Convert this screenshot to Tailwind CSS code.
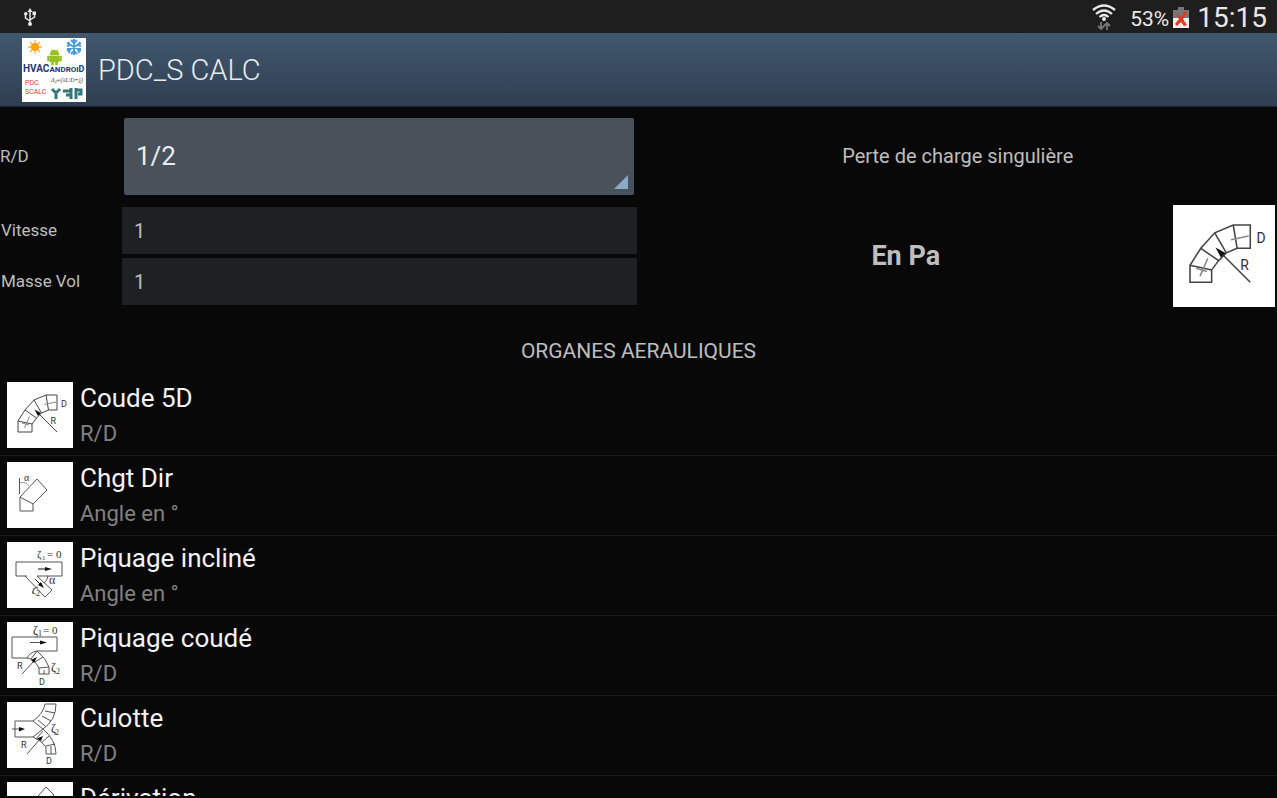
<!DOCTYPE html>
<html lang="fr">
<head>
  <meta charset="UTF-8" />
  <meta name="viewport" content="width=device-width, initial-scale=1" />
  <title>PDC_S CALC</title>
  <script src="https://cdn.jsdelivr.net/npm/@tailwindcss/browser@4"></script>
</head>
<body class="h-screen flex flex-col overflow-hidden bg-[#080808] text-[#bebebe] font-[Roboto,sans-serif]">

  <!-- Dessins des organes -->
  <svg class="hidden">
    <symbol id="coude" viewBox="0 0 66 66">
      <g fill="none" stroke="#444" stroke-width="1">
        <path d="M39 13H50V28H41.5L34.5 31L29.5 36L25 42V50H11V39L18 28L27 18Z" />
        <path d="M39 13L41.5 28M27 18L34.5 31M18 28L29.5 36M11 39L25 42" />
        <path d="M50 50L30 30" />
        <path d="M37.5 22.5L49 20M22.500 34.5L17.500 46M15 41L22 43" stroke="#888" />
      </g>
      <path d="M27.500 27.500L34 31L31 34Z" fill="#111" />
      <text x="54" y="24.500" font-size="9" fill="#333">D</text>
      <text x="43.500" y="42" font-size="9" fill="#333">R</text>
    </symbol>
    <symbol id="chgt" viewBox="0 0 66 66">
      <g fill="none" stroke="#555" stroke-width="1">
        <path d="M13 35L30 17L40 28L26 42L26 49H13Z" />
        <path d="M13 35L26 42M12.500 16V32" />
        <path d="M13 21Q19 19 22 24" stroke="#999" />
      </g>
      <text x="17" y="19" font-size="10" font-family="Liberation Serif, serif" fill="#333">α</text>
    </symbol>
    <symbol id="incline" viewBox="0 0 66 66">
      <g fill="none" stroke="#555" stroke-width="1">
        <path d="M20 34H9V20H55V34H30L45 48L38 55L18 34" />
        <path d="M31 27H40M28 37L33 42" stroke="#111" />
        <path d="M41 34Q40 39 37 41" />
        <path d="M31 45Q25 46 26 52" />
      </g>
      <path d="M38 25L45 27L38 29ZM31 43L37 46L34 40Z" fill="#111" />
      <g fill="#333" font-family="Liberation Serif, serif">
        <text x="30" y="16" font-size="11">ζ</text>
        <text x="35" y="18" font-size="7">1</text>
        <text x="40" y="16" font-size="11">= 0</text>
        <text x="42" y="42" font-size="12">α</text>
        <text x="25" y="52" font-size="9">ζ</text>
        <text x="29" y="54" font-size="8">2</text>
      </g>
    </symbol>
    <symbol id="piquage" viewBox="0 0 66 66">
      <g fill="none" stroke="#555" stroke-width="1">
        <path d="M20 36H5V15H50V29H30Q23 30 20 36L24 37Q30 41 32 46V52H42V45Q39 36 30 29" />
        <path d="M24 37L30 29M28 40L36 35M32 46L42 45M37 48V52" />
        <path d="M15 52L28 38M23 20.500H34" />
      </g>
      <path d="M33 18.500L40 20.500L33 22.500ZM30 35L24 38L27 41Z" fill="#111" />
      <g fill="#333" font-family="Liberation Serif, serif">
        <text x="26" y="12" font-size="12">ζ</text>
        <text x="31" y="14" font-size="8">1</text>
        <text x="36" y="12" font-size="11">= 0</text>
        <text x="44" y="49" font-size="12">ζ</text>
        <text x="49" y="52" font-size="8">2</text>
      </g>
      <text x="10" y="47" font-size="9" fill="#333">R</text>
      <text x="32" y="63" font-size="9" fill="#333">D</text>
    </symbol>
    <symbol id="culotte" viewBox="0 0 66 66">
      <g fill="none" stroke="#555" stroke-width="1">
        <path d="M26 35H8V19H26Q36 12 38 2H49Q49 18 36 27Q49 38 49 52H39V45Q34 38 26 35" />
        <path d="M38 9L48 11M35 14L44 19M31 18L38 24M26 19L36 27L26 35M29 37L36 29M34 41L42 34M39 44L48 42M44 44V52" />
        <path d="M5 27H14M20 52L34 36" />
      </g>
      <path d="M12 25L18 27L12 29.500ZM36 34L30 36.500L34 39Z" fill="#111" />
      <g fill="#333" font-family="Liberation Serif, serif">
        <text x="44" y="30" font-size="12">ζ</text>
        <text x="48" y="33" font-size="8">2</text>
      </g>
      <text x="14" y="46" font-size="9" fill="#333">R</text>
      <text x="39" y="62" font-size="9" fill="#333">D</text>
    </symbol>
    <symbol id="derivation" viewBox="0 0 66 66">
      <path d="M13 35L39 5L47 13L36 26L26 42V49H13Z" fill="none" stroke="#555" stroke-width="1" />
    </symbol>
  </svg>

  <!-- Barre d'état -->
  <div class="h-[33px] shrink-0 flex items-center justify-between bg-[#1e1e1e] pl-6 pr-2.5 text-[#e8e8e8]">
    <svg class="w-3 h-[18px]" viewBox="0 0 12 18" fill="none" stroke="#e8e8e8" stroke-width="1.500">
      <path d="M6 2V16M6 13L1.500 10V6M6 12L10.500 9V5" />
      <path d="M6 0L8.500 4H3.500Z" fill="#e8e8e8" stroke="none" />
      <circle cx="6" cy="16" r="2" fill="#e8e8e8" stroke="none" />
      <circle cx="1.800" cy="5.800" r="1.800" fill="#e8e8e8" stroke="none" />
      <path d="M8.500 3.500H12V7H8.500z" fill="#e8e8e8" stroke="none" />
    </svg>
    <div class="flex items-center">
      <svg class="w-6 h-[26px] mr-3.5" viewBox="0 0 24 26" fill="none">
        <path d="M1 6Q12 -3 23 6M4 10Q12 3 20 10M7.500 13Q12 9 16.500 13" stroke="#e8e8e8" stroke-width="2.300" />
        <circle cx="12" cy="15" r="2" fill="#e8e8e8" />
        <path d="M9 18V25M6 22L9 25L12 22M15 26V19M12 22L15 19L18 22" stroke="#777" stroke-width="1.800" />
      </svg>
      <span class="text-[21px] leading-8 pt-1 mr-1">53%</span>
      <svg class="w-4 h-[22px] mr-2" viewBox="0 0 16 22">
        <path d="M5 1H11V4H16V12H0V4H5Z" fill="#777" />
        <path d="M0 12H16V22H0Z" fill="#f0f0f0" />
        <path d="M3 7L8 11L12 5L14 7L10 13L14 19L11 20L8 16L4 20L2 18L6 13Z" fill="#e03a1c" />
      </svg>
      <span class="text-[28px] leading-8 pt-0.5">15:15</span>
    </div>
  </div>

  <!-- Barre de titre -->
  <header class="h-[74px] shrink-0 flex items-center gap-3 pl-[22px] bg-linear-to-b from-[#42586f] to-[#2f3f50] border-b border-[#1c2631]">
    <svg class="w-16 h-16 bg-white" viewBox="0 0 64 64">
      <path d="M13 2V16M6 9H20M8 4L18 14M18 4L8 14" stroke="#f9b233" stroke-width="1.300" />
      <circle cx="13" cy="9" r="4" fill="#fba31a" />
      <path d="M52 1V17M45 5L59 13M59 5L45 13M49 2L52 5L55 2M49 16L52 13L55 16M45 8L48 7L46 4M59 8L56 7L58 4M45 11L48 11L47 15M59 11L56 11L57 15" stroke="#4a9bdc" stroke-width="2" fill="none" />
      <path d="M28 17Q28 12 32.500 12Q37 12 37 17ZM28 18H37V24H35.500V27H33.500V24H31.500V27H29.500V24H28ZM25.500 18H27.500V23H25.500ZM37.500 18H39.500V23H37.500ZM29 11L31 14M36 11L34 14" fill="#97c024" stroke="#97c024" stroke-width="0.500" />
      <text x="1" y="34" font-size="10" font-weight="700" fill="#183a6e">HVAC<tspan font-size="8">ANDROI</tspan><tspan font-size="9">D</tspan></text>
      <text x="3" y="47" font-size="7" fill="#e53935">PDC</text>
      <text x="3" y="56" font-size="7" fill="#e53935">SCALC</text>
      <text x="29" y="44" font-size="6" font-style="italic" font-family="Liberation Serif, serif" fill="#333">Δₚ=(λL/D+ξ)</text>
      <path d="M30 51L34 55L38 51M34 54V61M41 53H49M44 57H49M49 50V61M54 50V61M54 52H59V56H56" stroke="#35767a" stroke-width="3" fill="none" />
    </svg>
    <h1 class="text-[29px] leading-9 font-light text-[#e8ecf0]">PDC_S CALC</h1>
  </header>

  <!-- Saisie et résultat -->
  <main class="shrink-0 grid grid-cols-2 text-[17px]">
    <form class="pt-[11px]">
      <div class="flex items-center mb-3">
        <label for="rd" class="w-[124px]">R/D</label>
        <div class="relative flex-1 mr-[5px]">
          <select id="rd" class="appearance-none block w-full h-[77px] rounded-xs bg-[#49515a] px-3 text-[26px] text-[#e8ecf0]">
            <option>1/2</option>
            <option>1</option>
            <option>2</option>
          </select>
          <svg class="absolute right-1.5 bottom-1.5 w-3.5 h-3.5 pointer-events-none" viewBox="0 0 14 14"><path d="M14 0V14H0Z" fill="#8ea9c6" /></svg>
        </div>
      </div>
      <div class="flex items-center mb-1">
        <label for="vitesse" class="w-[122px] pl-px">Vitesse</label>
        <input id="vitesse" type="text" value="1" class="flex-1 h-[47px] mr-0.5 px-3 bg-[#1e2123] text-xl" />
      </div>
      <div class="flex items-center">
        <label for="masse" class="w-[122px] pl-px">Masse Vol</label>
        <input id="masse" type="text" value="1" class="flex-1 h-[47px] mr-0.5 px-3 bg-[#1e2123] text-xl" />
      </div>
    </form>
    <section class="flex flex-col">
      <h2 class="h-[98px] flex items-center justify-center text-xl">Perte de charge singulière</h2>
      <div class="flex items-center pr-0.5">
        <p class="flex-1 text-center text-[27px] font-bold">En Pa</p>
        <svg class="w-[102px] h-[102px] bg-white"><use href="#coude" /></svg>
      </div>
    </section>
  </main>

  <!-- Liste des organes -->
  <h2 class="shrink-0 pt-[30px] pb-[11px] text-center text-[21px] leading-7">ORGANES AERAULIQUES</h2>
  <ul class="flex-1 min-h-0 overflow-hidden mb-0.5">
    <li class="h-20 flex items-start gap-[7px] pt-1.5 pl-[7px] border-b border-[#1b1b1b]">
      <svg class="w-[66px] h-[66px] bg-white"><use href="#coude" /></svg>
      <div class="-mt-0.5">
        <h3 class="text-[26px] leading-9 text-[#f3f3f3]">Coude 5D</h3>
        <p class="text-[22px] leading-9 text-[#808080]">R/D</p>
      </div>
    </li>
    <li class="h-20 flex items-start gap-[7px] pt-1.5 pl-[7px] border-b border-[#1b1b1b]">
      <svg class="w-[66px] h-[66px] bg-white"><use href="#chgt" /></svg>
      <div class="-mt-0.5">
        <h3 class="text-[26px] leading-9 text-[#f3f3f3]">Chgt Dir</h3>
        <p class="text-[22px] leading-9 text-[#808080]">Angle en °</p>
      </div>
    </li>
    <li class="h-20 flex items-start gap-[7px] pt-1.5 pl-[7px] border-b border-[#1b1b1b]">
      <svg class="w-[66px] h-[66px] bg-white"><use href="#incline" /></svg>
      <div class="-mt-0.5">
        <h3 class="text-[26px] leading-9 text-[#f3f3f3]">Piquage incliné</h3>
        <p class="text-[22px] leading-9 text-[#808080]">Angle en °</p>
      </div>
    </li>
    <li class="h-20 flex items-start gap-[7px] pt-1.5 pl-[7px] border-b border-[#1b1b1b]">
      <svg class="w-[66px] h-[66px] bg-white"><use href="#piquage" /></svg>
      <div class="-mt-0.5">
        <h3 class="text-[26px] leading-9 text-[#f3f3f3]">Piquage coudé</h3>
        <p class="text-[22px] leading-9 text-[#808080]">R/D</p>
      </div>
    </li>
    <li class="h-20 flex items-start gap-[7px] pt-1.5 pl-[7px] border-b border-[#1b1b1b]">
      <svg class="w-[66px] h-[66px] bg-white"><use href="#culotte" /></svg>
      <div class="-mt-0.5">
        <h3 class="text-[26px] leading-9 text-[#f3f3f3]">Culotte</h3>
        <p class="text-[22px] leading-9 text-[#808080]">R/D</p>
      </div>
    </li>
    <li class="h-20 flex items-start gap-[7px] pt-1.5 pl-[7px] border-b border-[#1b1b1b]">
      <svg class="w-[66px] h-[66px] bg-white"><use href="#derivation" /></svg>
      <div class="-mt-0.5">
        <h3 class="text-[26px] leading-9 text-[#f3f3f3]">Dérivation</h3>
        <p class="text-[22px] leading-9 text-[#808080]">Angle en °</p>
      </div>
    </li>
  </ul>
</body>
</html>
